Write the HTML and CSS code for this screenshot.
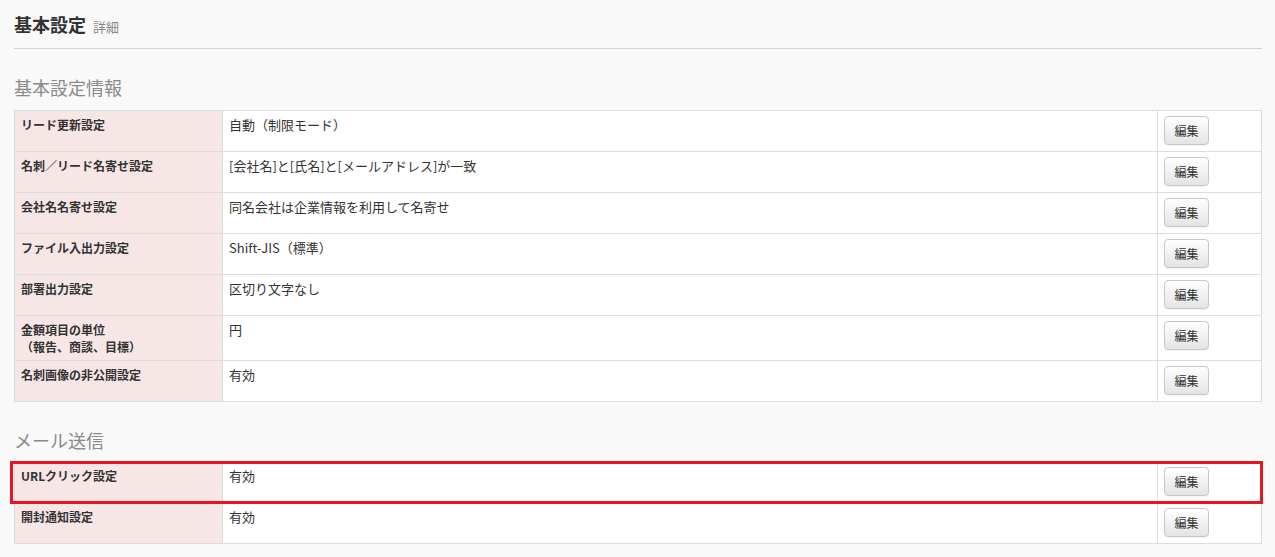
FILE: index.html
```html
<!DOCTYPE html>
<html lang="ja">
<head>
<meta charset="utf-8">
<title>基本設定 詳細</title>
<link rel="stylesheet" href="styles.css">
</head>
<body>
<div class="page">
  <header class="page-header">
    <h1 class="page-title">基本設定<small class="page-sub">詳細</small></h1>
  </header>

  <section class="section">
    <h2 class="section-title">基本設定情報</h2>
    <table class="settings">
      <colgroup><col class="c-label"><col class="c-value"><col class="c-action"></colgroup>
      <tr><th>リード更新設定</th><td>自動（制限モード）</td><td class="action"><button class="btn">編集</button></td></tr>
      <tr><th>名刺／リード名寄せ設定</th><td>[会社名]と[氏名]と[メールアドレス]が一致</td><td class="action"><button class="btn">編集</button></td></tr>
      <tr><th>会社名名寄せ設定</th><td>同名会社は企業情報を利用して名寄せ</td><td class="action"><button class="btn">編集</button></td></tr>
      <tr><th>ファイル入出力設定</th><td>Shift-JIS（標準）</td><td class="action"><button class="btn">編集</button></td></tr>
      <tr><th>部署出力設定</th><td>区切り文字なし</td><td class="action"><button class="btn">編集</button></td></tr>
      <tr><th>金額項目の単位<br>（報告、商談、目標）</th><td>円</td><td class="action"><button class="btn">編集</button></td></tr>
      <tr><th>名刺画像の非公開設定</th><td>有効</td><td class="action"><button class="btn">編集</button></td></tr>
    </table>
  </section>

  <section class="section">
    <h2 class="section-title section-title--tight">メール送信</h2>
    <div class="table-wrap">
      <table class="settings">
        <colgroup><col class="c-label"><col class="c-value"><col class="c-action"></colgroup>
        <tr><th>URLクリック設定</th><td>有効</td><td class="action"><button class="btn">編集</button></td></tr>
        <tr><th>開封通知設定</th><td>有効</td><td class="action"><button class="btn">編集</button></td></tr>
      </table>
      <div class="highlight"></div>
    </div>
  </section>
</div>
</body>
</html>
```

FILE: styles.css
```css
html, body {
  margin: 0;
  padding: 0;
  background: #f9f9f9;
}

body {
  font-family: "Noto Sans CJK JP", "Noto Sans", sans-serif;
  color: #333;
  font-size: 12px;
}

.page {
  padding: 0 13px 0 14px;
}

.page-header {
  padding: 12px 0 12px;
  border-bottom: 1px solid #d4d4d4;
}

.page-title {
  display: flex;
  align-items: baseline;
  margin: 0;
  height: 24px;
  font-size: 18px;
  line-height: 24px;
  font-weight: bold;
  color: #333;
}

.page-sub {
  font-size: 13px;
  font-weight: normal;
  color: #888;
  margin-left: 7px;
}

.section-title {
  margin: 26px 0 11px;
  font-size: 18px;
  line-height: 24px;
  font-weight: normal;
  color: #8a8a8a;
}

.section-title--tight {
  margin-bottom: 9px;
}

.table-wrap {
  position: relative;
}

.settings {
  width: 1248px;
  border-collapse: collapse;
  background: #fff;
  table-layout: fixed;
}

.c-label { width: 208px; }
.c-action { width: 104px; }

.settings th,
.settings td {
  border: 1px solid #ddd;
  padding: 5px 6px 5px;
  vertical-align: top;
  text-align: left;
  line-height: 17px;
  font-size: 13px;
  color: #333;
}

.settings th {
  background: #f6e6e6;
  font-weight: bold;
  font-size: 12px;
}

.settings td.action {
  padding: 5px 6px 6px;
}

.btn {
  display: block;
  width: 45px;
  height: 29px;
  padding: 0;
  border: 1px solid #c8c8c8;
  border-radius: 4px;
  background: linear-gradient(#ffffff, #e4e4e4);
  box-shadow: 0 1px 1px rgba(0, 0, 0, 0.05);
  font-family: "Noto Sans CJK JP", sans-serif;
  font-size: 12px;
  color: #333;
  cursor: pointer;
}

.highlight {
  position: absolute;
  top: 0;
  left: -4px;
  width: 1253px;
  height: 43px;
  border: 3px solid #e8141f;
  box-sizing: border-box;
  pointer-events: none;
}
```
